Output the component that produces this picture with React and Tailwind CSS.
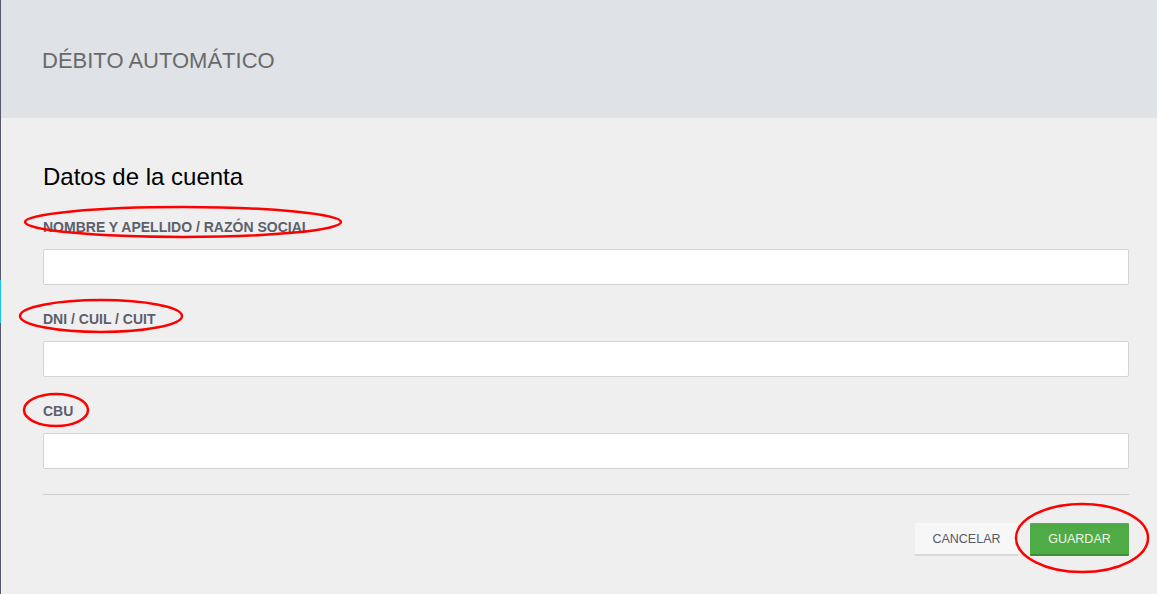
import React from 'react';

const fieldLabels = ['NOMBRE Y APELLIDO / RAZÓN SOCIAL', 'DNI / CUIL / CUIT', 'CBU'];

function Field({ label }) {
  return (
    <div className="mb-[25px]">
      <label className="block h-[18px] leading-[18px] mb-[13px] text-[14px] font-bold text-[#5c5f6d]">{label}</label>
      <input
        type="text"
        className="block w-full h-[36px] bg-white border border-[#d4d4d4] rounded-[2px] outline-none"
      />
    </div>
  );
}

export default function App() {
  return (
    <div
      className="relative w-full min-h-[594px] bg-[#efefef] border-l border-[#55596a]"
      style={{ fontFamily: '"Liberation Sans", Arial, sans-serif' }}
    >
      {/* left accent */}
      <div className="absolute left-[-1px] top-[280px] w-[1px] h-[43px] bg-[#1fc3e6]" />

      {/* Header */}
      <div className="h-[118px] bg-[#dfe3e7] flex items-center pl-[41px]">
        <h1 className="text-[22px] text-[#6a6a6a] pt-[2px]">DÉBITO AUTOMÁTICO</h1>
      </div>

      {/* Body */}
      <div className="pl-[42px] pr-[28px]">
        <h2 className="mt-[46px] text-[24px] leading-[1.1] text-black">Datos de la cuenta</h2>
        <div className="mt-[28px]">
          {fieldLabels.map((l) => (
            <Field key={l} label={l} />
          ))}
        </div>
        <hr className="border-0 border-t border-[#cfcfcf]" />
        <div className="flex justify-end gap-[12px] mt-[28px]">
          <button className="h-[33px] w-[103px] bg-[#f7f7f7] border-b-2 border-[#d9d9d9] text-[12.5px] text-[#555a66]">
            CANCELAR
          </button>
          <button className="h-[33px] w-[99px] bg-[#4fab45] border-b-2 border-[#3e8e36] text-[12.5px] text-[#eef7ec] rounded-[1px]">
            GUARDAR
          </button>
        </div>
      </div>

      {/* red annotation ellipses */}
      <svg className="absolute inset-0 pointer-events-none" width="1157" height="594">
        <g fill="none" stroke="#ff0000" strokeWidth="2.5">
          <ellipse cx="182" cy="222" rx="158" ry="15" />
          <ellipse cx="100" cy="316" rx="81" ry="16" />
          <ellipse cx="55" cy="410" rx="32" ry="16" />
          <ellipse cx="1081" cy="538" rx="66" ry="34" />
        </g>
      </svg>
    </div>
  );
}
